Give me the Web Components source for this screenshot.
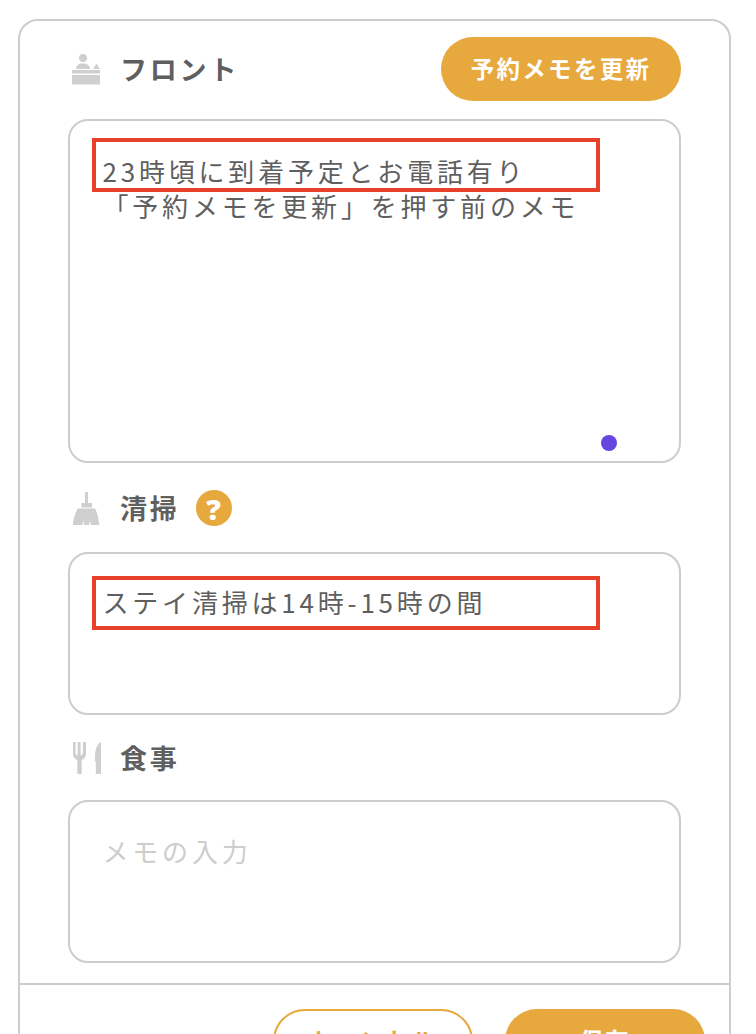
<!DOCTYPE html>
<html lang="ja"><head><meta charset="utf-8"><title>メモ</title>
<style>
html,body{margin:0;padding:0;background:#fff;height:1034px;overflow:hidden;font-family:"Noto Sans CJK JP","Noto Sans",sans-serif;color:#5f5f5f}
</style></head><body>
<memo-card>
  <memo-section gap="18">
    <section-head slot="head" label="フロント" style="height:64px;margin-top:16px">
      <svg slot="icon" width="30" height="32" viewBox="0 0 30 32" fill="#cfcfcf"><circle cx="11" cy="5" r="4"/><path d="M4 16c0-3.500 3-5.500 7-5.500s7 2 7 5.500z"/><path d="M24.500 10.500l3.500 5.500h-7z"/><rect x="0" y="17" width="28" height="3.500"/><rect x="0" y="22" width="28" height="9.500"/></svg>
      <pill-button slot="action" kind="solid" style="width:240px">予約メモを更新</pill-button>
    </section-head>
    <memo-box style="height:344px">
      <div>23時頃に到着予定とお電話有り</div>
      <div>「予約メモを更新」を押す前のメモ</div>
      <mark-rect slot="over" style="top:17px"></mark-rect>
      <span slot="over" class="dot" style="position:absolute;left:531px;top:314px;width:16px;height:16px;border-radius:50%;background:#6645e0"></span>
    </memo-box>
  </memo-section>
  <memo-section gap="26" style="margin-top:27px">
    <section-head slot="head" label="清掃" style="height:36px">
      <svg slot="icon" width="30" height="36" viewBox="0 0 30 36" fill="#cfcfcf"><rect x="13" y="2" width="3" height="12"/><path d="M9.500 13h10.500v4.500H9.500z"/><path d="M6 18.500h17c1.800 3 3.500 9 4.300 16.500h-8.500l-.8-4.500-1.200 4.500h-4.600l-1-4.500-1 4.500H.8c.8-7.500 3-13.500 5.200-16.500z"/></svg>
      <help-badge slot="after"></help-badge>
    </section-head>
    <memo-box style="height:163px;padding-top:30px">
      <div>ステイ清掃は14時-15時の間</div>
      <mark-rect slot="over" style="top:22px"></mark-rect>
    </memo-box>
  </memo-section>
  <memo-section gap="25" style="margin-top:26px">
    <section-head slot="head" label="食事" style="height:34px">
      <svg slot="icon" width="30" height="34" viewBox="0 0 30 34" fill="#cfcfcf"><path d="M1 1h2.600v10.500c0 1.500.5 2.500 2 3V1h3v13.500c1.500-.5 2.300-1.500 2.300-3V1H14v11.500c0 3-1.500 5.500-4.300 6.500v14H5.300V19C2.500 18 1 15.500 1 12.500z"/><path d="M29 1v32h-5.200V20.500H23C22.500 11 24 3.500 29 1z"/></svg>
    </section-head>
    <memo-box style="height:163px;padding-top:31px" placeholder>
      <div>メモの入力</div>
    </memo-box>
  </memo-section>
  <memo-footer>
    <pill-button kind="outline" style="width:200px">キャンセル</pill-button>
    <pill-button kind="solid" style="width:200px">保存</pill-button>
  </memo-footer>
</memo-card>
<script>
function def(name, html){
  customElements.define(name, class extends HTMLElement{
    constructor(){super();this.attachShadow({mode:'open'}).innerHTML=html;}
    connectedCallback(){
      const l=this.shadowRoot.querySelector('.label');
      if(l)l.textContent=this.getAttribute('label')||'';
      const g=this.getAttribute('gap');
      if(g)this.style.setProperty('--gap',g+'px');
    }
  });
}
def('memo-card',`<style>:host{display:block;box-sizing:border-box;margin:19px 25px 0 18px;height:1100px;border:2px solid #cdcdcd;border-radius:20px;background:#fff}</style><slot></slot>`);
def('memo-section',`<style>:host{display:flex;flex-direction:column;gap:var(--gap,20px);padding:0 48px}</style><slot name="head"></slot><slot></slot>`);
def('section-head',`<style>:host{display:flex;align-items:center}
.ic{display:flex;width:52px;flex:none;padding-left:4px;box-sizing:border-box;margin-right:1px}
.label{font-size:27px;font-weight:700;letter-spacing:2.800px;line-height:1;color:#5f5f5f;padding-bottom:2px;margin-left:-1px}
.after{margin-left:16px;display:flex}
.action{margin-left:auto;display:flex}</style>
<span class="ic"><slot name="icon"></slot></span><span class="label"></span><span class="after"><slot name="after"></slot></span><span class="action"><slot name="action"></slot></span>`);
def('memo-box',`<style>:host{display:block;box-sizing:border-box;position:relative;border:2px solid #cdcdcd;border-radius:20px;padding:32px 32.500px;font-size:26px;line-height:35px;letter-spacing:3.800px;color:#5f5f5f;background:#fff}
:host([placeholder]){color:#cdcdcd}</style><slot></slot><slot name="over"></slot>`);
def('mark-rect',`<style>:host{display:block;position:absolute;left:22px;width:508px;height:54px;box-sizing:border-box;border:4px solid #e7412a}</style>`);
def('help-badge',`<style>:host{display:flex;align-items:center;justify-content:center;width:36px;height:36px;border-radius:50%;background:#e7a83e;color:#fff;font-size:29px;font-weight:800;line-height:1;font-family:"Open Sans","Noto Sans",sans-serif}</style>?`);
def('pill-button',`<style>:host{display:flex;align-items:center;justify-content:center;box-sizing:border-box;height:64px;border-radius:32px;font-size:23.500px;font-weight:700;letter-spacing:2.300px;line-height:1;flex:none}
:host([kind=solid]){background:#e7a83e;color:#fff}
:host([kind=outline]){background:#fff;border:2px solid #e7a83e;color:#e7a83e}</style><slot></slot>`);
def('memo-footer',`<style>:host{display:flex;justify-content:flex-end;gap:32px;margin-top:20px;border-top:2px solid #cdcdcd;padding:24px 24px 0}</style><slot></slot>`);
</script>
</body></html>
